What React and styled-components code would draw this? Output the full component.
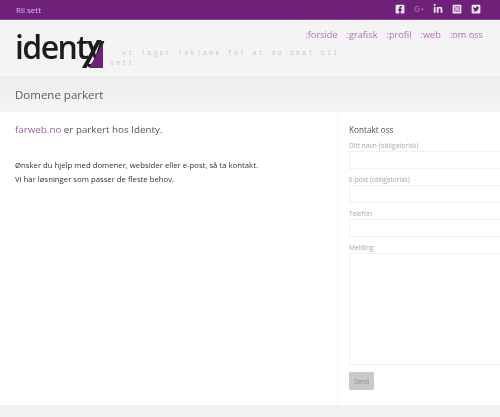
import React from 'react';
import styled, { createGlobalStyle } from 'styled-components';
import { FaFacebookSquare, FaGooglePlusG, FaLinkedinIn, FaInstagramSquare, FaTwitterSquare } from 'react-icons/fa';

const GlobalStyle = createGlobalStyle`
  html, body {
    margin: 0;
    padding: 0;
    width: 500px;
    height: 417px;
    overflow: hidden;
    background: #fff;
    font-family: "Open Sans", "Liberation Sans", sans-serif;
  }
  * { box-sizing: border-box; }
`;

const Page = styled.div`
  display: flex;
  flex-direction: column;
  width: 500px;
  height: 417px;
  overflow: hidden;
  filter: blur(0.6px);
`;

const TopBar = styled.div`
  display: flex;
  justify-content: space-between;
  align-items: center;
  height: 20px;
  padding: 0 19px 1px 16px;
  background: #6f2079;
  border-bottom: 1px solid #8b4a93;
  flex: none;
`;

const TopLink = styled.a`
  color: #d8bcdc;
  font-size: 8px;
`;

const Social = styled.div`
  display: flex;
  align-items: center;
  gap: 9px;
  color: #efe6f0;
  svg { display: block; width: 10px; height: 10px; }
`;

const GooglePlus = styled.span`
  color: #a468ac;
  display: block;
`;

const Header = styled.header`
  display: flex;
  height: 56px;
  padding: 8px 17px 0 15px;
  background: #f4f4f4;
  flex: none;
`;

const Logo = styled.div`
  position: relative;
  width: 88px;
  height: 44px;
  flex: none;
`;

const LogoText = styled.span`
  display: block;
  color: #1c1c1c;
  font-family: "Open Sans", sans-serif;
  font-size: 32px;
  font-weight: 600;
  line-height: 38px;
  letter-spacing: -1.6px;
`;

const LogoMark = styled.svg`
  position: absolute;
  right: 0;
  top: 12px;
`;

const HeaderRight = styled.div`
  flex: 1;
  margin-left: 7px;
`;

const Nav = styled.nav`
  display: flex;
  justify-content: flex-end;
  gap: 9px;
  height: 21px;
`;

const NavLink = styled.a`
  color: #b06fb8;
  font-size: 9.2px;
  line-height: 14px;
`;

const Slogan = styled.div`
  width: 236px;
  color: #c8c8c8;
  font-family: "Liberation Mono", monospace;
  font-size: 6.5px;
  line-height: 10px;
  letter-spacing: 2.3px;
`;

const TitleBand = styled.div`
  height: 36px;
  padding: 10px 15px 0;
  background: linear-gradient(#ededed, #f5f5f5);
  flex: none;
`;

const PageTitle = styled.h1`
  margin: 0;
  color: #5a5a5a;
  font-size: 11.5px;
  font-weight: 400;
  line-height: 17px;
`;

const Main = styled.main`
  display: flex;
  flex: 1;
  min-height: 0;
  background: #fff;
`;

const Content = styled.section`
  width: 337px;
  padding: 10px 15px 0;
  flex: none;
`;

const Lead = styled.p`
  margin: 0 0 21px;
  color: #555;
  font-size: 9.8px;
  line-height: 15px;
`;

const DomainLink = styled.a`
  color: #a25cab;
`;

const Body = styled.p`
  margin: 0;
  color: #333;
  font-size: 7.75px;
  line-height: 14px;
`;

const Side = styled.aside`
  flex: 1;
  padding: 12px 0 0 11px;
  border-left: 1px solid #f6f6f6;
  min-width: 0;
`;

const SideTitle = styled.h2`
  margin: 0 0 5px;
  color: #555;
  font-size: 8.2px;
  font-weight: 400;
  line-height: 12px;
`;

const Label = styled.label`
  display: block;
  height: 9px;
  margin-bottom: 1px;
  color: #a6a6a6;
  font-size: 6.6px;
  line-height: 9px;
`;

const Input = styled.input`
  display: block;
  width: 190px;
  height: 18px;
  margin-bottom: 6px;
  padding: 0;
  border: 1px solid #f0f0f0;
  background: #fff;
`;

const TextArea = styled.textarea`
  display: block;
  width: 190px;
  height: 112px;
  margin-bottom: 7px;
  padding: 0;
  border: 1px solid #f0f0f0;
  background: #fff;
  resize: none;
`;

const Send = styled.button`
  display: block;
  width: 25px;
  height: 18px;
  padding: 0;
  border: 1px solid #c8c8c8;
  border-radius: 1px;
  background: #c9c9c9;
  color: #8c8c8c;
  font-family: inherit;
  font-size: 6.5px;
`;

const Footer = styled.footer`
  height: 12px;
  background: #f1f1f1;
  flex: none;
`;

const navItems = [':forside', ':grafisk', ':profil', ':web', ':om oss'];

const fields = ['Ditt navn (obligatorisk)', 'E-post (obligatorisk)', 'Telefon'];

export default function App() {
  return (
    <Page>
      <GlobalStyle />
      <TopBar>
        <TopLink>Ril sett</TopLink>
        <Social>
          <FaFacebookSquare />
          <GooglePlus><FaGooglePlusG /></GooglePlus>
          <FaLinkedinIn />
          <FaInstagramSquare />
          <FaTwitterSquare />
        </Social>
      </TopBar>
      <Header>
        <Logo>
          <LogoText>identy</LogoText>
          <LogoMark width="22" height="28" viewBox="0 0 22 28">
            <path d="M22 3 L22 28 L8 28 Z" fill="#6f2079" />
            <path d="M16 0 L20.5 0 L5.5 28 L1 28 Z" fill="#1c1c1c" />
          </LogoMark>
        </Logo>
        <HeaderRight>
          <Nav>
            {navItems.map((item) => (
              <NavLink key={item}>{item}</NavLink>
            ))}
          </Nav>
          <Slogan>- vi lager reklame for at du skal bli sett</Slogan>
        </HeaderRight>
      </Header>
      <TitleBand>
        <PageTitle>Domene parkert</PageTitle>
      </TitleBand>
      <Main>
        <Content>
          <Lead>
            <DomainLink>farweb.no</DomainLink> er parkert hos Identy.
          </Lead>
          <Body>
            Ønsker du hjelp med domener, websider eller e-post, så ta kontakt.
            <br />
            Vi har løsninger som passer de fleste behov.
          </Body>
        </Content>
        <Side>
          <SideTitle>Kontakt oss</SideTitle>
          {fields.map((field) => (
            <div key={field}>
              <Label>{field}</Label>
              <Input />
            </div>
          ))}
          <Label>Melding</Label>
          <TextArea />
          <Send>Send</Send>
        </Side>
      </Main>
      <Footer />
    </Page>
  );
}
